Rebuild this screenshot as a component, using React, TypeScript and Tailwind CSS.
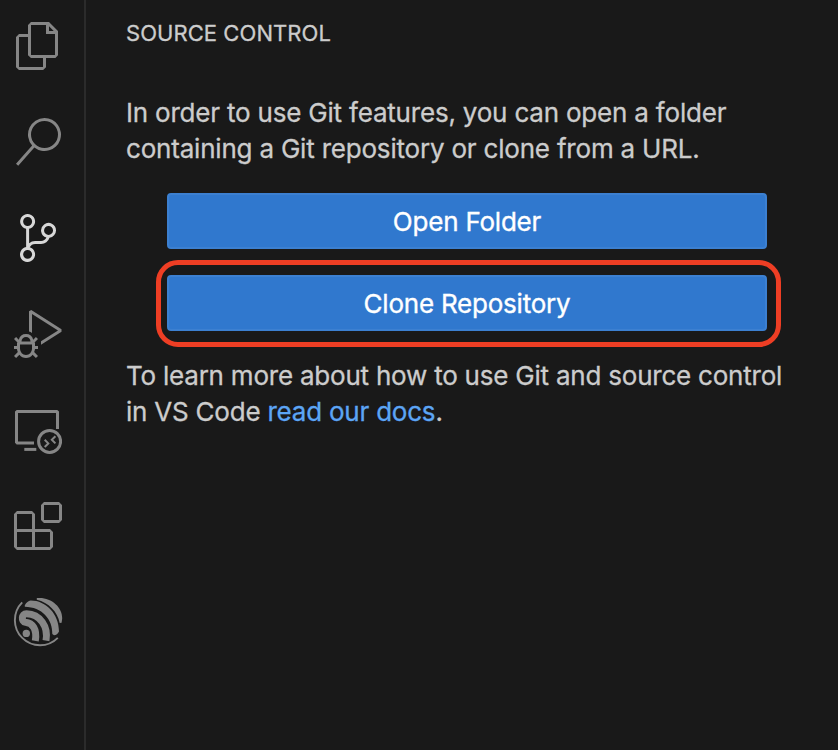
import type { ReactNode } from "react";

function Glyph({ d }: { d: string }) {
  return (
    <svg viewBox="0 0 24 24" className="size-12 fill-current">
      <path fillRule="evenodd" clipRule="evenodd" d={d} />
    </svg>
  );
}

const FILES =
  "M17.5 0h-9L7 1.5V6H2.5L1 7.5v15.07L2.5 24h12.07L16 22.57V18h4.7l1.3-1.43V4.5L17.5 0zm0 2.12l2.38 2.38H17.5V2.12zm-3 20.38h-12v-15H7v9.07L8.5 18h6v4.5zm6-6h-12v-15H16V6h4.5v10.5z";
const SEARCH =
  "M15.25 0a8.25 8.25 0 0 0-6.18 13.72L1 22.88l1.12 1 8.05-9.12A8.251 8.251 0 1 0 15.25.01V0zm0 15a6.75 6.75 0 1 1 0-13.5 6.75 6.75 0 0 1 0 13.5z";
const BRANCH =
  "M21.007 8.222A3.738 3.738 0 0 0 15.045 5.2a3.737 3.737 0 0 0 1.156 6.583 2.988 2.988 0 0 1-2.668 1.67h-2.99a4.456 4.456 0 0 0-2.989 1.165V7.4a3.737 3.737 0 1 0-1.494 0v9.117a3.776 3.776 0 1 0 1.816.099 2.99 2.99 0 0 1 2.668-1.667h2.99a4.484 4.484 0 0 0 4.223-3.039 3.736 3.736 0 0 0 3.25-3.687zM4.565 3.738a2.242 2.242 0 1 1 4.484 0 2.242 2.242 0 0 1-4.484 0zm4.484 16.441a2.242 2.242 0 1 1-4.484 0 2.242 2.242 0 0 1 4.484 0zm8.221-9.715a2.242 2.242 0 1 1 0-4.485 2.242 2.242 0 0 1 0 4.485z";
const DEBUG =
  "M10.94 13.5l-1.32 1.32a3.73 3.73 0 0 0-7.24 0L1.06 13.5 0 14.56l1.72 1.72-.22.22V18H0v1.5h1.5v.08c.077.489.214.966.41 1.42L0 22.94 1.06 24l1.65-1.65A4.308 4.308 0 0 0 6 24a4.31 4.31 0 0 0 3.29-1.65L10.94 24 12 22.94 10.09 21c.198-.464.336-.951.41-1.45v-.1H12V18h-1.5v-1.5l-.22-.22L12 14.56l-1.06-1.06zM6 13.5a2.25 2.25 0 0 1 2.25 2.25h-4.5A2.25 2.25 0 0 1 6 13.5zm3 6a3.33 3.33 0 0 1-3 3 3.33 3.33 0 0 1-3-3v-2.25h6v2.25zm14.76-9.9v1.26L13.5 17.37V15.6l8.5-5.37L9 2v9.46a5.07 5.07 0 0 0-1.5-.72V.63L8.64 0l15.12 9.6z";
const EXTENSIONS =
  "M13.5 1.5L15 0h7.5L24 1.5V9l-1.5 1.5H15L13.5 9V1.5zm1.5 0V9h7.5V1.5H15zM0 15V6l1.5-1.5H9L10.5 6v7.5H18l1.5 1.5v7.5L18 24H1.5L0 22.5V15zm9-1.5V6H1.5v7.5H9zM9 15H1.5v7.5H9V15zm1.5 7.5H18V15h-7.5v7.5z";

function RemoteIcon() {
  return (
    <svg viewBox="0 0 48 48" className="size-12 fill-none stroke-current" strokeWidth="3">
      <path d="M43.5 23V6.2L42.7 5.5H3.3l-.8.7v30l.8.9H20" />
      <path d="M10.3 43.4h12" />
      <circle cx="35.6" cy="35.4" r="11" />
      <path strokeWidth="2" d="M30.7 33.8l3.6 3.6-3.6 3.6M41.4 30.2l-3.6 3.6 3.6 3.6" />
    </svg>
  );
}

function EspressifIcon() {
  return (
    <svg viewBox="0 0 48 48" className="size-12 overflow-visible fill-none stroke-current">
      <path strokeWidth="1.9" d="M8.2 4.4A25 25 0 0 0 43.8 39.9" />
      <path
        className="fill-current stroke-none"
        d="M22.8.1C36-1.6 48.6 8.5 48.2 20.5l-.6 4.2-1.9.3C43.5 13.5 34.5 4.5 22.8 1.7z"
      />
      <path
        className="fill-current stroke-none"
        d="M10.8 7.2C12.3 4.6 14.5 2.9 16.5 2.6C32 2.5 44.9 16 45 33.5C43.8 35.7 42.3 37.3 40 37.3L38.3 36C38.8 21.5 28 9 10.8 8.8z"
      />
      <path
        strokeWidth="7"
        strokeLinejoin="round"
        d="M32 42.6C34.5 28.5 26 16 12.5 15.7C7.5 15.6 6.8 23.6 11.5 24.3C18.5 25 23.3 31 21.3 42.8"
      />
      <circle className="fill-current stroke-none" cx="12.3" cy="35.4" r="3.7" />
    </svg>
  );
}

function ActionButton({ children }: { children: ReactNode }) {
  return (
    <button className="h-14 w-[600px] rounded-[4px] border-2 border-[#3c80d1] bg-[#3078ce] pt-0.5 text-[26px] leading-[36px] tracking-[-0.22px] text-white [-webkit-text-stroke:0.35px]">
      {children}
    </button>
  );
}

export default function App() {
  return (
    <div className="flex h-[750px] w-[838px] overflow-hidden bg-[#191919] font-['Inter',sans-serif] text-[#cccccc]">
      <nav className="flex w-[86px] shrink-0 flex-col gap-12 border-r-2 border-[#2b2b2b] pt-[22px] pl-3.5 text-[#868686]">
        <Glyph d={FILES} />
        <Glyph d={SEARCH} />
        <div className="text-[#d7d7d7]">
          <Glyph d={BRANCH} />
        </div>
        <Glyph d={DEBUG} />
        <RemoteIcon />
        <Glyph d={EXTENSIONS} />
        <EspressifIcon />
      </nav>
      <main className="flex flex-1 flex-col pl-10 [-webkit-text-stroke:0.3px]">
        <h1 className="mt-[15px] h-9 text-[22px] leading-[36px] tracking-[0.06px] whitespace-nowrap">SOURCE CONTROL</h1>
        <p className="mt-11 text-[26px] leading-[36px] tracking-[-0.2px] whitespace-nowrap">
          <span className="block">In order to use Git features, you can open a folder</span>
          <span className="block">containing a Git repository or clone from a URL.</span>
        </p>
        <div className="mt-[26px] ml-[41px] flex">
          <ActionButton>Open Folder</ActionButton>
        </div>
        <div className="mt-[11px] ml-[30px] h-[87px] w-[625px] rounded-[22px] border-5 border-[#ee3e24] pt-[10px] pl-1.5">
          <ActionButton>Clone Repository</ActionButton>
        </div>
        <p className="mt-[11px] text-[26px] leading-[36px] tracking-[-0.22px] whitespace-nowrap">
          <span className="block">To learn more about how to use Git and source control</span>
          <span className="block">
            in VS Code <a className="text-[#5ca5f5]">read our docs</a>.
          </span>
        </p>
      </main>
    </div>
  );
}
